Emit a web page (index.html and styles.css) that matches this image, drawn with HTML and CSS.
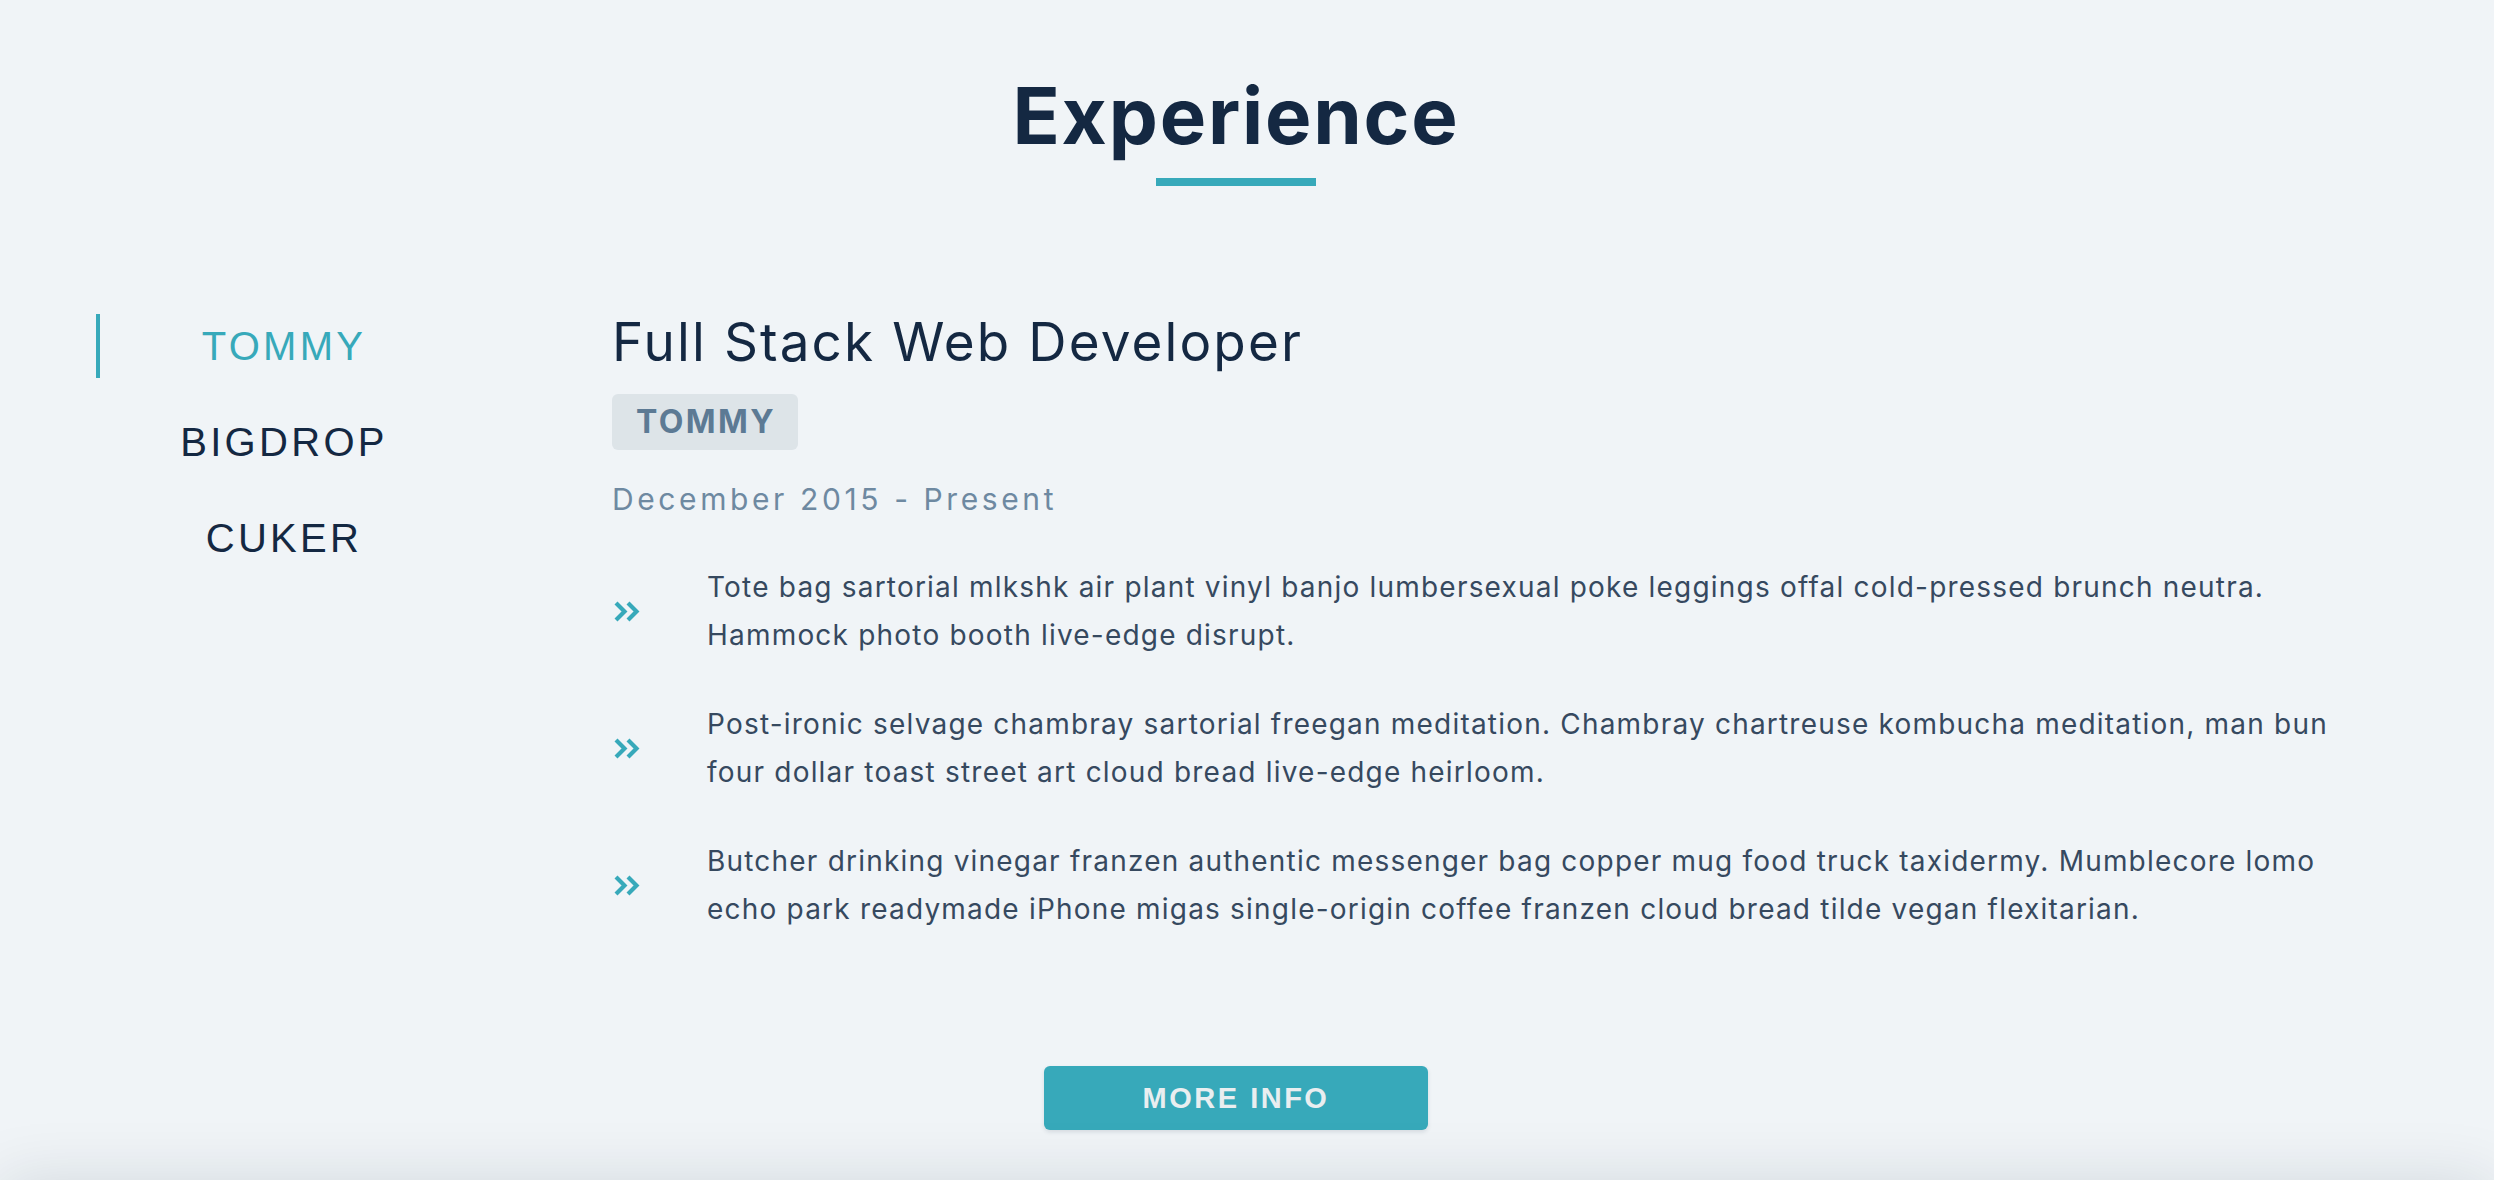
FILE: index.html
```html
<!DOCTYPE html>
<html lang="en">
<head>
<meta charset="utf-8">
<title>Experience</title>
<link rel="stylesheet" href="styles.css">
</head>
<body>
<section class="experience">
  <div class="container">
    <h2 class="section-title">Experience</h2>
    <div class="title-bar"></div>
    <div class="row">
      <ul class="tabs">
        <li class="tab active">TOMMY</li>
        <li class="tab">BIGDROP</li>
        <li class="tab">CUKER</li>
      </ul>
      <div class="job">
        <h3 class="job-title">Full Stack Web Developer</h3>
        <span class="badge">TOMMY</span>
        <p class="dates">December 2015 - Present</p>
        <ul class="duties">
          <li class="duty">
            <svg class="chev" viewBox="0 0 26 21" width="26" height="21"><path d="M2 2 L10.5 10.5 L2 19 M14 2 L22.5 10.5 L14 19" fill="none" stroke="currentColor" stroke-width="4.2"/></svg>
            <p>Tote bag sartorial mlkshk air plant vinyl banjo lumbersexual poke leggings offal cold-pressed brunch neutra. Hammock photo booth live-edge disrupt.</p>
          </li>
          <li class="duty">
            <svg class="chev" viewBox="0 0 26 21" width="26" height="21"><path d="M2 2 L10.5 10.5 L2 19 M14 2 L22.5 10.5 L14 19" fill="none" stroke="currentColor" stroke-width="4.2"/></svg>
            <p>Post-ironic selvage chambray sartorial freegan meditation. Chambray chartreuse kombucha meditation, man bun four dollar toast street art cloud bread live-edge heirloom.</p>
          </li>
          <li class="duty">
            <svg class="chev" viewBox="0 0 26 21" width="26" height="21"><path d="M2 2 L10.5 10.5 L2 19 M14 2 L22.5 10.5 L14 19" fill="none" stroke="currentColor" stroke-width="4.2"/></svg>
            <p>Butcher drinking vinegar franzen authentic messenger bag copper mug food truck taxidermy. Mumblecore lomo echo park readymade iPhone migas single-origin coffee franzen cloud bread tilde vegan flexitarian.</p>
          </li>
        </ul>
      </div>
    </div>
    <div class="actions">
      <a class="btn" href="#">MORE INFO</a>
    </div>
  </div>
</section>
<section class="next-section"></section>
</body>
</html>
```
FILE: styles.css
```css
* { box-sizing: border-box; }
html, body { margin: 0; padding: 0; }
body {
  background: #f0f4f7;
  font-family: Inter, "Noto Sans", sans-serif;
  color: #142842;
}
.experience {
  padding: 77px 0 50px;
  position: relative;
  z-index: 0;
}
.container {
  padding: 0 118px 0 96px;
  display: flex;
  flex-direction: column;
}
.section-title {
  margin: 0;
  font-size: 78px;
  line-height: 78px;
  font-weight: 700;
  text-align: center;
  letter-spacing: 1.8px;
  color: #142842;
}
.title-bar {
  width: 160px;
  height: 8px;
  background: #37a9ba;
  margin: 23px auto 0;
}
.row {
  display: flex;
  margin-top: 124px;
}
.tabs {
  list-style: none;
  margin: 0;
  padding: 4px 0 0;
  width: 372px;
  flex: none;
  display: flex;
  flex-direction: column;
  gap: 32px;
}
.tab {
  height: 64px;
  line-height: 64px;
  border-left: 4px solid transparent;
  text-align: center;
  font-family: "Liberation Sans", Arial, sans-serif;
  font-size: 40px;
  letter-spacing: 3.3px;
  color: #142842;
}
.tab.active {
  border-left-color: #37a9ba;
  color: #37a9ba;
}
.job {
  margin-left: 144px;
  flex: 1;
  display: flex;
  flex-direction: column;
  align-items: flex-start;
}
.job-title {
  margin: 0;
  font-size: 53px;
  line-height: 64px;
  font-weight: 400;
  letter-spacing: 2.1px;
  color: #142842;
}
.badge {
  margin-top: 20px;
  height: 56px;
  line-height: 56px;
  padding: 0 22px 0 24px;
  background: #dde4e8;
  border-radius: 6px;
  font-size: 32px;
  font-weight: 700;
  letter-spacing: 2.4px;
  color: #5c7a94;
}
.dates {
  margin: 29px 0 0;
  font-size: 30px;
  line-height: 40px;
  letter-spacing: 3.6px;
  color: #6e89a1;
}
.duties {
  list-style: none;
  margin: 44px 0 0;
  padding: 0;
  display: flex;
  flex-direction: column;
  gap: 41px;
}
.duty {
  display: flex;
  align-items: center;
}
.chev {
  flex: none;
  color: #37a9ba;
  margin-left: 2px;
  margin-right: 67px;
}
.duty p {
  margin: 0;
  font-size: 28px;
  line-height: 48px;
  letter-spacing: 1.2px;
  color: #36495f;
}
.actions {
  display: flex;
  justify-content: center;
  margin-top: 133px;
}
.btn {
  display: block;
  width: 384px;
  height: 64px;
  line-height: 64px;
  text-align: center;
  background: #37a9ba;
  border-radius: 6px;
  box-shadow: 0 2px 4px rgba(20, 40, 66, 0.12);
  text-decoration: none;
  font-family: "Liberation Sans", Arial, sans-serif;
  font-weight: 700;
  font-size: 29px;
  letter-spacing: 2.5px;
  color: #e9eef0;
}
.next-section {
  height: 400px;
  background: #f0f4f7;
  box-shadow: 0 0 60px rgba(0, 30, 50, 0.12);
  position: relative;
  z-index: 1;
}
```
